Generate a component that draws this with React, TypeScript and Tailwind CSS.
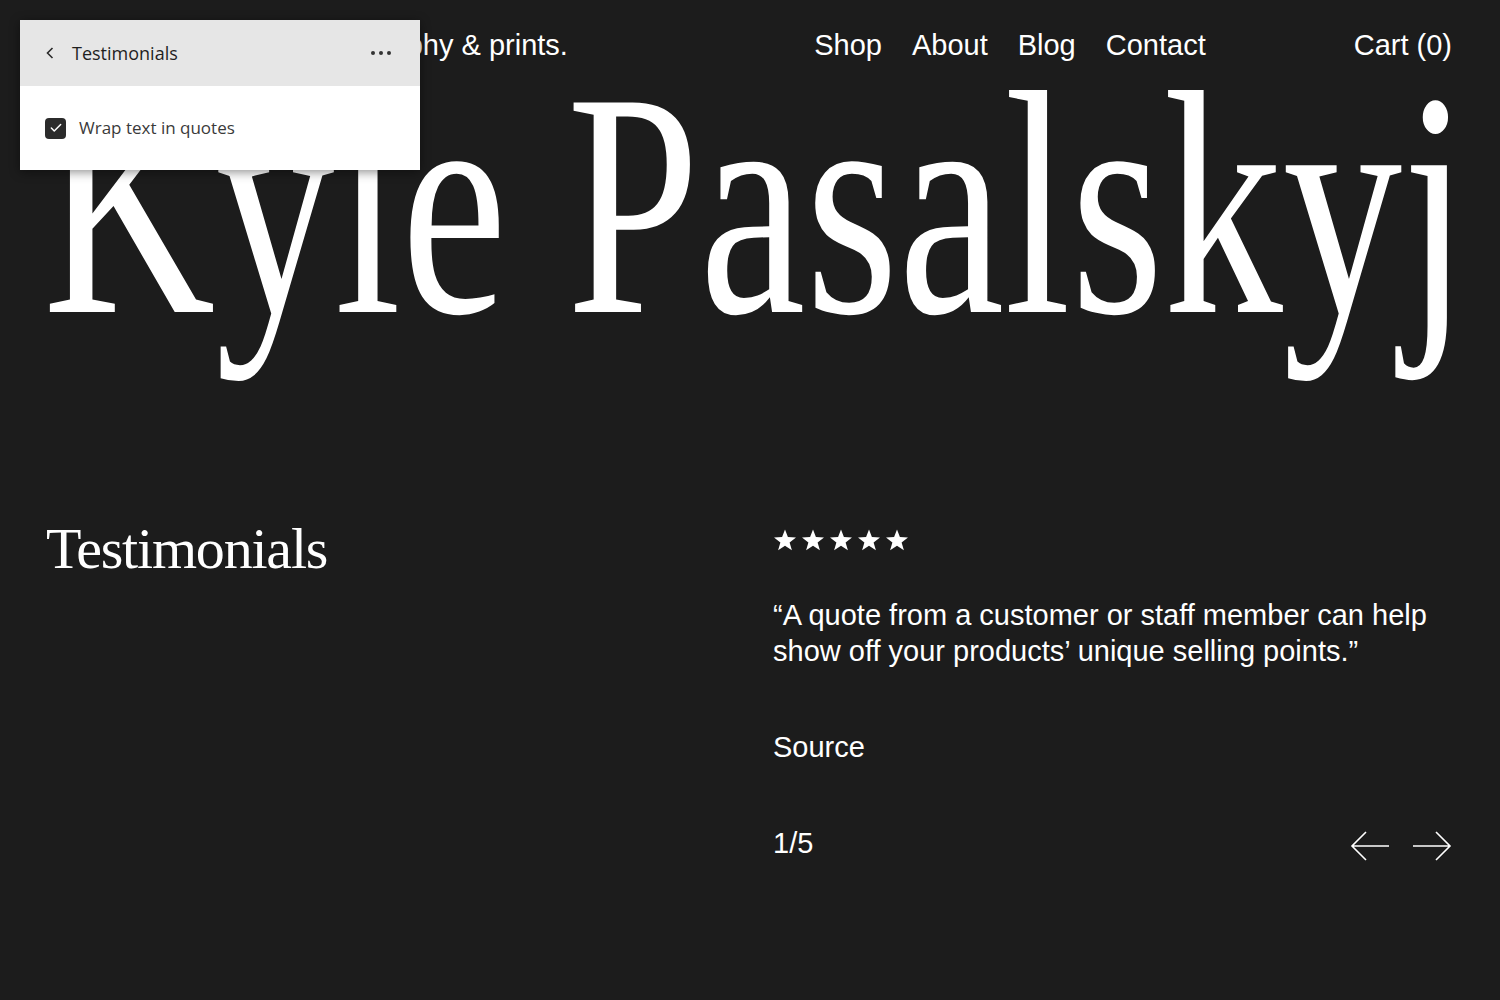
import { Check } from 'lucide-react';

const sans = "font-['Liberation_Sans',Arial,sans-serif]";
const serif = "font-['Liberation_Serif','Times_New_Roman',serif]";

const Star = () => (
  <svg width="24" height="24" viewBox="0 0 24 24" className="fill-white">
    <path d="M12 1.5l2.9 7.6 8.1.3-6.4 5 2.3 7.9L12 17.7l-6.9 4.6 2.3-7.9-6.4-5 8.1-.3z" />
  </svg>
);

const Arrow = ({ dir }: { dir: 'left' | 'right' }) => (
  <svg width="40" height="32" viewBox="0 0 40 32" fill="none" stroke="white" strokeWidth="1.6">
    {dir === 'left' ? (
      <path d="M39 16H2M16 2L2 16l14 14" />
    ) : (
      <path d="M1 16h37M24 2l14 14-14 14" />
    )}
  </svg>
);

const EditorPanel = () => (
  <div className="absolute left-[20px] top-[20px] w-[400px] bg-white shadow-[0_2px_10px_rgba(0,0,0,0.45)] font-['Open_Sans','Noto_Sans',sans-serif]">
    <div className="h-[66px] bg-[#e6e6e6] flex items-center pl-[25px] pr-[28px]">
      <svg width="10" height="12" viewBox="0 0 10 12" fill="none" stroke="#2a2a2a" strokeWidth="1.6">
        <path d="M7.5 1L2.5 6l5 5" />
      </svg>
      <span className="ml-[17px] text-[18px] font-medium text-[#1f1f1f]">Testimonials</span>
      <svg className="ml-auto" width="22" height="6" viewBox="0 0 22 6" fill="#333">
        <circle cx="3" cy="3" r="2" />
        <circle cx="11" cy="3" r="2" />
        <circle cx="19" cy="3" r="2" />
      </svg>
    </div>
    <div className="h-[84px] flex items-center pl-[25px]">
      <span className="w-[21px] h-[21px] rounded-[4px] bg-[#2b2b2b] flex items-center justify-center">
        <Check size={14} strokeWidth={2.5} color="white" />
      </span>
      <span className="ml-[13px] text-[17px] text-[#3a3a3a]">Wrap text in quotes</span>
    </div>
  </div>
);

export default function App() {
  return (
    <div className={`relative min-h-[1000px] w-full overflow-hidden bg-[#1c1c1c] text-white ${sans}`}>
      <header className="h-[92px] flex items-center pl-[46px] pr-[48px] text-[29px]">
        <span className="ml-[243px]">Photography &amp; prints.</span>
        <nav className="ml-auto mr-[148px] flex gap-[30px]">
          <a>Shop</a>
          <a>About</a>
          <a>Blog</a>
          <a>Contact</a>
        </nav>
        <a>Cart (0)</a>
      </header>

      <div className="pl-[43px]">
        <h1 className={`${serif} text-[320px] leading-[224px] whitespace-nowrap origin-left scale-x-[0.746]`}>
          Kyle Pasalskyj
        </h1>
      </div>

      <section className="mt-[204px] grid grid-cols-2 gap-x-12 pl-[46px] pr-[48px]">
        <h2 className={`${serif} text-[58px] leading-none tracking-[-1.2px]`}>Testimonials</h2>
        <div>
          <div className="mt-2 flex gap-1">
            <Star />
            <Star />
            <Star />
            <Star />
            <Star />
          </div>
          <p className="mt-[45px] text-[29px] leading-[36px]">
            “A quote from a customer or staff member can help show off your products’ unique selling points.”
          </p>
          <p className="mt-[60px] text-[29px] leading-[36px]">Source</p>
          <div className="mt-[59px] flex items-center justify-between">
            <span className="text-[29px] leading-[36px]">1/5</span>
            <div className="flex gap-[22px] mt-[6px]">
              <Arrow dir="left" />
              <Arrow dir="right" />
            </div>
          </div>
        </div>
      </section>

      <EditorPanel />
    </div>
  );
}
